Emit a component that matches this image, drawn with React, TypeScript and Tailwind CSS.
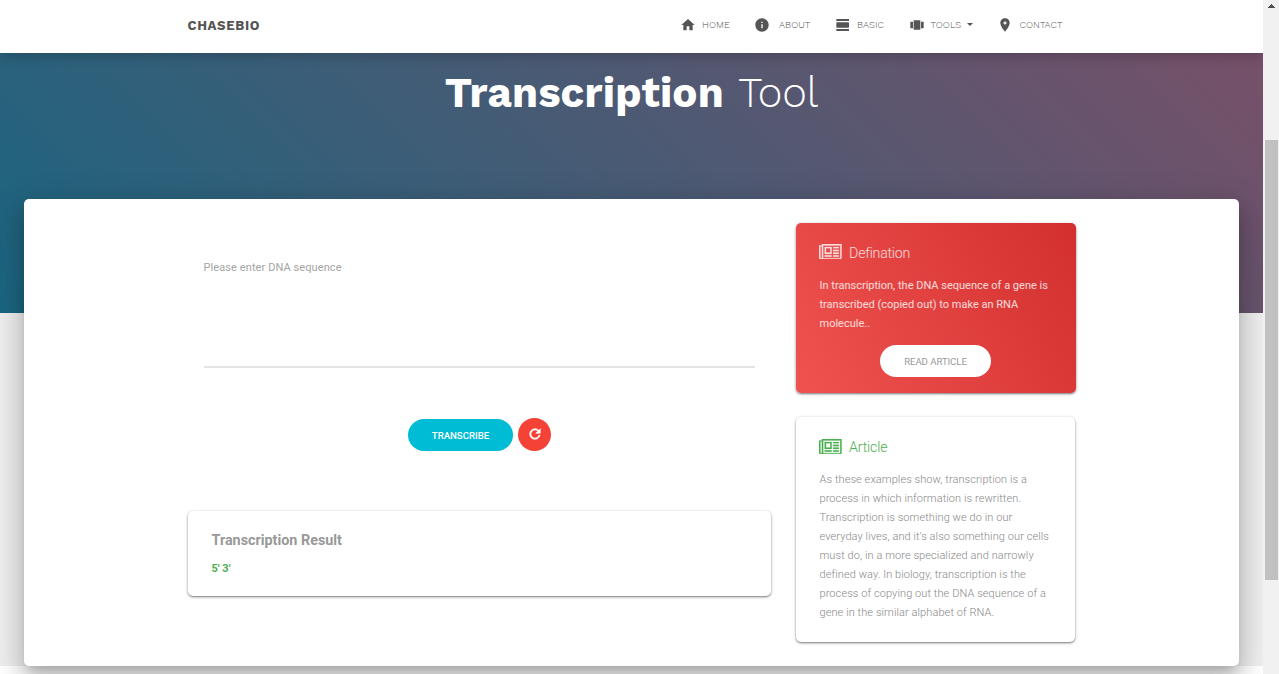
import { MdHome, MdInfo, MdViewDay, MdViewCarousel } from "react-icons/md";

function Newspaper({ className }: { className: string }) {
  return (
    <svg viewBox="0 0 2048 1408" className={className} fill="currentColor" stroke="currentColor" strokeWidth="20">
      <path
        transform="translate(0 1408) scale(1 -1)"
        d="M1024 1024h-384v-384h384v384zM1152 384v-128h-640v128h640zM1152 1152v-640h-640v640h640zM1792 384v-128h-512v128h512zM1792 640v-128h-512v128h512zM1792 896v-128h-512v128h512zM1792 1152v-128h-512v128h512zM256 192v960q0 26 -19 45t-45 19t-45 -19t-19 -45v-960q0 -26 19 -45t45 -19t45 19t19 45zM1920 192v1088h-1536v-1088q0 -33 -11 -64h1483q26 0 45 19t19 45zM2048 1408v-1216q0 -80 -56 -136t-136 -56h-1664q-80 0 -136 56t-56 136v1088h256v128h1792z"
      />
    </svg>
  );
}

function Pin() {
  return (
    <svg viewBox="0 0 24 24" className="size-4" fill="currentColor" fillRule="evenodd">
      <path d="M12 2C8.100 2 5 5.100 5 9c0 5.200 7 13 7 13s7-7.800 7-13c0-3.900-3.100-7-7-7zM12 5.800l1.100 2.100 2.100 1.100-2.100 1.100-1.100 2.100-1.100-2.100L8.800 9l2.100-1.100z" />
    </svg>
  );
}

function Refresh() {
  return (
    <svg viewBox="0 0 24 24" className="mb-px size-4" fill="currentColor" stroke="currentColor" strokeWidth="0.8">
      <path d="M17.650 6.350C16.200 4.900 14.210 4 12 4c-4.420 0-7.990 3.580-7.990 8s3.570 8 7.990 8c3.730 0 6.840-2.550 7.730-6h-2.080c-.82 2.330-3.040 4-5.650 4-3.310 0-6-2.690-6-6s2.690-6 6-6c1.660 0 3.140.69 4.220 1.780L13 11h7V4l-2.350 2.350z" />
    </svg>
  );
}

function Nav() {
  return (
    <header className="relative z-20 flex h-[53px] shrink-0 bg-white pl-[187.5px] text-[#555] shadow-[0_3px_12px_0_rgba(0,0,0,0.22)] font-['Work_Sans',Inter,sans-serif]">
      <a className="w-[492.5px] pt-[15.5px] text-[13.2px] leading-5 font-bold tracking-[0.65px]">CHASEBIO</a>
      <nav className="flex h-[50px] items-center text-[9.6px] font-[350] tracking-[0.05px]">
        <a className="flex w-[74px] items-center gap-[6px]"><MdHome className="size-4" />HOME</a>
        <a className="flex w-[81px] items-center gap-[9px]"><MdInfo className="size-4" />ABOUT</a>
        <a className="flex w-[74px] items-center gap-[6px]"><MdViewDay className="size-4" />BASIC</a>
        <a className="flex w-[88px] items-center gap-[5.500px]">
          <MdViewCarousel className="size-4" />TOOLS
          <span className="mb-0.5 border-x-[3px] border-t-[3px] border-x-transparent border-t-[#555]" />
        </a>
        <a className="flex items-center gap-[6.500px]"><Pin />CONTACT</a>
      </nav>
    </header>
  );
}

export default function App() {
  return (
    <div className="flex h-[674px] w-[1279px] overflow-hidden bg-white font-[Roboto,sans-serif] text-[#999]">
      <div className="flex w-[1263px] flex-col overflow-hidden">
        <Nav />
        <section className="h-[260px] shrink-0 bg-[linear-gradient(45deg,#1a6580,#775069)] text-center">
          <h1 className="pt-[15px] text-[42px] leading-[50px] whitespace-nowrap text-white font-['Work_Sans',Inter,sans-serif]">
            <span className="font-bold tracking-[0.15px]">Transcription</span> <span className="font-light">Tool</span>
          </h1>
        </section>
        <div className="h-[353px] shrink-0 bg-[#eee]">
          <main className="relative z-10 mx-6 -mt-[114px] flex h-[467px] items-start gap-[25px] rounded-[5px] bg-white pt-6 pl-[164px] shadow-[0_16px_24px_2px_rgba(0,0,0,0.14),0_6px_30px_5px_rgba(0,0,0,0.12),0_8px_10px_-5px_rgba(0,0,0,0.2)]">
            <div className="w-[583px]">
              <div className="mx-4 h-[145px] border-b-2 border-[#e4e4e4] pt-[35px] text-[11px] leading-[19px] tracking-[0.09px] text-[#a4a4a4]">
                <span className="-ml-[0.5px]">Please enter DNA sequence</span>
              </div>
              <div className="mt-[50px] flex items-center justify-center gap-[5px]">
                <button className="h-8 w-[105px] rounded-full bg-[#00bcd4] pt-[3px] text-[9.6px] font-medium text-white">TRANSCRIBE</button>
                <button className="grid size-[33px] place-items-center rounded-full bg-[#f44336] text-white">
                  <Refresh />
                </button>
              </div>
              <section className="mt-[60px] h-[85px] rounded-[5px] bg-white px-[23.5px] pt-5 shadow-[0_1px_2px_rgba(0,0,0,0.45),0_1px_4px_rgba(0,0,0,0.14)]">
                <h2 className="text-[14.35px] leading-5 font-bold">Transcription Result</h2>
                <p className="mt-[8px] text-[11px] leading-5 font-bold text-[#4caf50]">5' 3'</p>
              </section>
            </div>
            <aside className="w-[280px]">
              <section className="h-[170px] rounded-[5px] bg-[linear-gradient(60deg,#ef5350,#d32f2f)] px-[23.5px] pt-5 text-white/80 shadow-[0_1px_2px_rgba(0,0,0,0.45),0_1px_4px_rgba(0,0,0,0.14)]">
                <h3 className="flex h-5 items-center text-[14.2px] font-light">
                  <Newspaper className="mr-[7.5px] -ml-[0.5px] mb-[3px] h-[15.700px] w-[22.600px]" /><span className="pt-0.5 tracking-[-0.25px]">Defination</span>
                </h3>
                <p className="mt-[13px] text-[11px] leading-[19px] whitespace-nowrap">
                  In transcription, the DNA sequence of a gene is<br />transcribed (copied out) to make an RNA<br />molecule..
                </p>
                <button className="mt-3 ml-[60.5px] block h-8 w-[111px] rounded-full bg-white pt-0.5 text-[9.6px] tracking-[-0.05px] text-[#999]">READ ARTICLE</button>
              </section>
              <section className="mt-6 h-[225px] w-[279px] rounded-[5px] bg-white px-[23.5px] pt-5 shadow-[0_1px_2px_rgba(0,0,0,0.45),0_1px_4px_rgba(0,0,0,0.14)]">
                <h3 className="flex h-5 items-center text-[14.2px] font-light text-[#4caf50]">
                  <Newspaper className="mr-[7.5px] -ml-[0.5px] mb-px h-[15.700px] w-[22.600px]" /><span className="pt-0.5 tracking-[-0.2px]">Article</span>
                </h3>
                <p className="mt-[13px] text-[11px] leading-[19px] font-light tracking-[0.085px] whitespace-nowrap text-[#888]">
                  As these examples show, transcription is a<br />process in which information is rewritten.<br />Transcription is something we do in our<br />everyday lives, and it's also something our cells<br />must do, in a more specialized and narrowly<br />defined way. In biology, transcription is the<br />process of copying out the DNA sequence of a<br />gene in the similar alphabet of RNA.
                </p>
              </section>
            </aside>
          </main>
        </div>
      </div>
      <div className="w-4 bg-[#f1f1f1]">
        <svg viewBox="0 0 16 10" className="h-[10px] w-4" shapeRendering="crispEdges">
          <path d="M5 8L8.500 4 12 8z" fill="#505050" />
        </svg>
        <div className="mt-[130px] ml-0.5 h-[440px] w-[13px] bg-[#c1c1c1]" />
      </div>
    </div>
  );
}
